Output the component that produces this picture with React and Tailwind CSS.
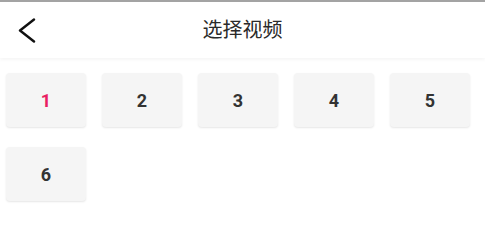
import React from "react";

const videos = [1, 2, 3, 4, 5, 6];

const App = () => {
  const current = 1;

  return (
    <div className="w-[485px] h-[234px] bg-white font-['Roboto','Noto_Sans_CJK_SC',sans-serif]">
      <div className="h-[2px] bg-[#a3a3a3]" />
      <header className="relative h-[56px] flex items-center justify-center shadow-[0_2px_3px_rgba(0,0,0,0.04)]">
        <button className="absolute left-[16px] top-[16px] w-[22px] h-[26px]">
          <svg width="22" height="26" viewBox="0 0 22 26" fill="none">
            <polyline
              points="18,1.5 4,12.5 18,23.5"
              stroke="#111111"
              strokeWidth="2.4"
              strokeLinecap="round"
              strokeLinejoin="round"
            />
          </svg>
        </button>
        <h1 className="text-[20px] text-[#2a2a2a] leading-none">选择视频</h1>
      </header>

      <div className="grid grid-cols-[repeat(5,80px)] gap-x-[16px] gap-y-[20px] px-[6px] pt-[15px]">
        {videos.map((n) => (
          <button
            key={n}
            className={
              "h-[54px] rounded-[4px] bg-[#f5f5f5] shadow-[0_1px_2px_rgba(0,0,0,0.1)] text-[18px] font-bold " +
              (n === current ? "text-[#e91e63]" : "text-[#333333]")
            }
          >
            {n}
          </button>
        ))}
      </div>
    </div>
  );
};

export default App;
